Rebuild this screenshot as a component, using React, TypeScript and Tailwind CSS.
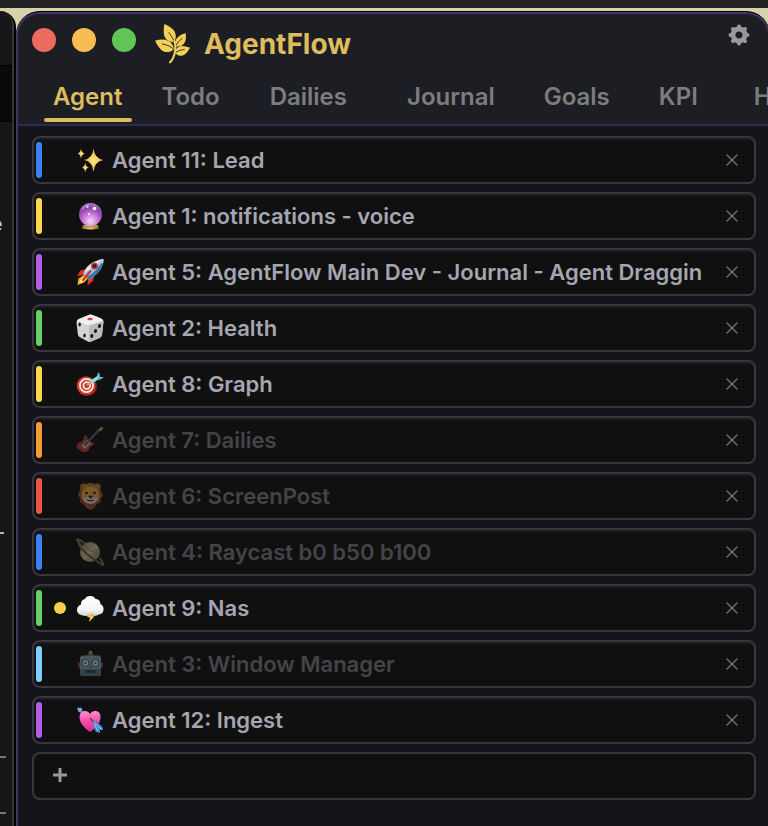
import React, { useState } from 'react';
import { clsx } from 'clsx';

interface Tab {
  name: string;
  pad: string;
}

interface Agent {
  id: number;
  name: string;
  bar: string;
  icon: React.ReactNode;
  idle?: boolean;
  pending?: boolean;
}

const Icon = ({ children }: { children: React.ReactNode }) => (
  <svg viewBox="0 0 28 28" className="w-7 h-7" aria-hidden="true">
    {children}
  </svg>
);

const Sparkles = () => (
  <Icon>
    <defs>
      <radialGradient id="spark">
        <stop offset="0" stopColor="#ffe873" />
        <stop offset="1" stopColor="#efaf4c" />
      </radialGradient>
    </defs>
    <g fill="url(#spark)">
      <path d="M17.500 2.500Q18.300 12.500 27.500 14Q18.300 15.500 17.500 26Q16.700 15.500 8 14Q16.700 12.500 17.500 2.500Z" />
      <path d="M5 2.500Q5.500 7 9 7.600Q5.500 8.200 5 13Q4.500 8.200 1.500 7.600Q4.500 7 5 2.500Z" />
      <path d="M9.200 16.500Q9.700 20.900 13 21.500Q9.700 22.100 9.200 26.500Q8.700 22.100 5.800 21.500Q8.700 20.900 9.200 16.500Z" />
    </g>
  </Icon>
);

const CrystalBall = () => (
  <Icon>
    <defs>
      <radialGradient id="ball" cx=".5" cy=".8" r=".8">
        <stop offset="0" stopColor="#f6d8ff" />
        <stop offset=".4" stopColor="#c97ad9" />
        <stop offset=".75" stopColor="#9140a8" />
        <stop offset="1" stopColor="#aa83bb" />
      </radialGradient>
      <linearGradient id="stand">
        <stop offset="0" stopColor="#9b6f28" />
        <stop offset=".5" stopColor="#f0d376" />
        <stop offset="1" stopColor="#84621f" />
      </linearGradient>
    </defs>
    <path d="M7 23h15l1 3.500Q14.500 28.500 6 26.500Z" fill="url(#stand)" />
    <circle cx="14.500" cy="12.500" r="11.500" fill="url(#ball)" />
    <path d="M8 22.500Q14.500 26 21 22.500l-.5 2.200Q14.500 26.500 8.500 24.700Z" fill="#b99549" />
    <circle cx="18.500" cy="6.500" r="1.800" fill="#fff" />
    <circle cx="13" cy="12" r="1.100" fill="#fff" opacity=".9" />
    <circle cx="11.500" cy="5" r="1" fill="#fff" opacity=".8" />
    <path d="M6 8Q9 3 13 3" stroke="#e8bcf0" strokeWidth="1" fill="none" opacity=".7" />
  </Icon>
);

const Rocket = () => (
  <Icon>
    <path d="M10 11L4.500 12.500L1 18L8.500 17Z" fill="#d9341f" />
    <path d="M18 18L17 23L11.500 27.500L12 20Z" fill="#d9341f" />
    <path d="M8 17L2.500 20.500L1.500 27L8 24.500L12 20.500Z" fill="#f8b52a" />
    <path d="M8 18.500L4.500 22L3.500 25.500L8 22.500L10 20Z" fill="#fff09a" />
    <path d="M27.500 1Q28 10 18.500 18L13 21.500L7 16L10.500 9.500Q17 2 27.500 1Z" fill="#9fc4df" />
    <path d="M27.500 1Q28 10 18.500 18L13 21.500L10.500 19Q22 13 27.500 1Z" fill="#2f76b7" />
    <path d="M27 1.500Q17 2.500 10.500 10L8 15Q16 11 27 1.500Z" fill="#dfe8ee" />
    <path d="M27.500 1Q25 1 22.500 2L26.500 6Q27.600 4 27.500 1Z" fill="#b9cbd8" />
    <circle cx="18.500" cy="8" r="3.500" fill="#d83a31" />
    <circle cx="18.500" cy="8" r="2" fill="#202b34" />
    <path d="M14.500 13L7 22" stroke="#d82d1d" strokeWidth="2" strokeLinecap="round" />
  </Icon>
);

const Dice = () => (
  <Icon>
    <path d="M14 0.500Q16 .5 25 4.500Q28 6 27.500 8L26 21Q25.500 23 23.500 24L15.500 27.500Q13.500 28.500 11 27L3.500 23Q2 22 1.800 20L.5 8Q.5 6 3 5Z" fill="#d4d5d3" />
    <path d="M13 10.500L27.500 7L26 21Q25.500 23 23.500 24L13 28Z" fill="#b9bbb9" />
    <path d="M14 .5Q16 .5 25 4.500Q28 6 26 7.500L14.500 11Q13 11.500 11 10.700L2 7.500Q0 6 3 5Z" fill="#eff0ed" />
    <ellipse cx="14" cy="5" rx="2.700" ry="1.200" fill="#df3b35" />
    <g fill="#171717">
      <ellipse cx="3.700" cy="10.500" rx="1.200" ry="2" />
      <ellipse cx="8.500" cy="21.500" rx="1.200" ry="2" />
      <ellipse cx="23.500" cy="12" rx="1.500" ry="2.100" transform="rotate(15 23.500 12)" />
      <ellipse cx="19.500" cy="17" rx="1.500" ry="2.100" transform="rotate(15 19.500 17)" />
      <ellipse cx="15.800" cy="22" rx="1.500" ry="2.100" transform="rotate(15 15.800 22)" />
    </g>
  </Icon>
);

const Target = () => (
  <Icon>
    <ellipse cx="11" cy="16.500" rx="10" ry="9.500" fill="#9d2119" />
    <circle cx="10" cy="15.500" r="9.300" fill="#d53a2c" />
    <circle cx="10.500" cy="15.500" r="6.600" fill="none" stroke="#f3eeee" strokeWidth="1.800" />
    <circle cx="10.800" cy="15.500" r="3.400" fill="none" stroke="#f3eeee" strokeWidth="1.700" />
    <path d="M11 15L16 12" stroke="#d7a744" strokeWidth="1.800" />
    <path d="M14.500 12.500L23 7" stroke="#79d2dc" strokeWidth="3.500" />
    <path d="M20 8L22.500 2L24 4.500L23.500 6.500L28 7.500L23.500 10Z" fill="#58b6c9" />
    <path d="M15 12L23 6.500" stroke="#c6f5ee" strokeWidth="1" />
  </Icon>
);

const Guitar = () => (
  <Icon>
    <path d="M8 10Q10 8 11 11L13 14L15 16Q16 17 18 16.500Q18 20 14 20.500Q13 22 13 24Q10 28 5 25L1 22Q-.5 18 3.500 16.500Q7.500 16 8 10Z" fill="#c83b36" />
    <path d="M11 14L15 18L9 23L5.500 19.500Z" fill="#d5d5d5" />
    <path d="M9 19L24 3" stroke="#6d6663" strokeWidth="2.400" />
    <path d="M22.500 4Q24 0 27.500 1.500Q27 4 24 5.500Z" fill="#d29462" />
    <path d="M7 18l4 3M9 16l4 3" stroke="#555" strokeWidth="1" />
  </Icon>
);

const Lion = () => (
  <Icon>
    <path d="M4 3Q7 0 10 2Q14 -.5 18 2Q22 0 25 3L24.500 7L27 13L24.500 17L25 20L21 22L18.500 26L14.500 28L10.500 26L7.500 22L4 20L4.500 17L2 13L4 7Z" fill="#a8542b" />
    <path d="M5 4Q8 0 10.500 3Q14.500 0 18.500 3Q21 0 24 4L23 10L24.500 15H4.500L6 9Z" fill="#c5822d" />
    <ellipse cx="14.500" cy="12.500" rx="8.500" ry="8" fill="#efb044" />
    <path d="M5.500 14Q10 19 14.500 13Q19 19 23.500 14Q22 21 14.500 22Q7 21 5.500 14Z" fill="#e7dfc8" />
    <circle cx="10.500" cy="11" r="1.300" fill="#241b18" />
    <circle cx="18.500" cy="11" r="1.300" fill="#241b18" />
    <path d="M12.500 14h4L14.500 16.500ZM11 18Q14.500 20 18 18" fill="#302424" stroke="#302424" strokeWidth=".8" />
  </Icon>
);

const Planet = () => (
  <Icon>
    <defs>
      <linearGradient id="saturn" x1="0" y1="0" x2="1" y2="1">
        <stop offset="0" stopColor="#99896c" />
        <stop offset=".5" stopColor="#d5c99d" />
        <stop offset="1" stopColor="#807359" />
      </linearGradient>
    </defs>
    <path d="M7 9Q-1 1 2 1.500Q5 2 11 7" stroke="#85714e" strokeWidth="2" fill="none" />
    <circle cx="14" cy="14" r="10" fill="url(#saturn)" />
    <path d="M7 7Q14 14 24 16" stroke="#a18f69" strokeWidth="1" fill="none" />
    <path d="M2 2Q3 11 15 19Q23 25 27 27Q28 25 23.500 20" stroke="#8e7754" strokeWidth="2" fill="none" />
    <path d="M5 10Q11 18 21 23.500" stroke="#4e432d" strokeWidth="1" fill="none" />
  </Icon>
);

const StormCloud = () => (
  <Icon>
    <defs>
      <linearGradient id="cloud" x1="0" y1="0" x2="0" y2="1">
        <stop offset="0" stopColor="#fff" />
        <stop offset=".7" stopColor="#f2f4f8" />
        <stop offset="1" stopColor="#c8ced8" />
      </linearGradient>
    </defs>
    <path d="M5 21Q1 20 1 16Q1 12 5 10.500Q4.500 6 9 5Q10 2 14.500 2Q18 2 19.500 5Q24 5 24.500 10Q28 12 27.500 16Q27 20 23 20.500Q19 23 15 21Q10 23 5 21Z" fill="url(#cloud)" />
    <path d="M13.500 19.500L11 23L14 23.500L13 28L18.500 22.500L15.500 21.800L18 19Z" fill="#f2c94c" />
  </Icon>
);

const Robot = () => (
  <Icon>
    <rect x="2" y="12" width="25" height="6" rx="2" fill="#b6463d" />
    <path d="M11 6Q11 3 14.500 3Q18 3 18 6Z" fill="#6c4d78" />
    <circle cx="14.500" cy="2.500" r="2" fill="#db9f33" />
    <path d="M4 8Q4 5.500 7 5.500H22Q25 5.500 25 8V24Q25 26 22 26H7Q4 26 4 24Z" fill="#86aeb9" />
    <path d="M4 19H25V24Q25 26 22 26H7Q4 26 4 24Z" fill="#53858f" />
    <circle cx="9.500" cy="13" r="3.500" fill="#e0f4ee" stroke="#395e69" />
    <circle cx="19.500" cy="13" r="3.500" fill="#e0f4ee" stroke="#395e69" />
    <circle cx="9.500" cy="13" r="1.200" fill="#48717e" />
    <circle cx="19.500" cy="13" r="1.200" fill="#48717e" />
    <path d="M14.500 15L16.500 18H12.500Z" fill="#cf493f" />
    <path d="M9.500 21.500H19.500" stroke="#20343b" strokeWidth="2.500" strokeDasharray="2 .6" />
  </Icon>
);

const HeartArrow = () => (
  <Icon>
    <defs>
      <linearGradient id="heart" x1="0" y1="0" x2="0" y2="1">
        <stop offset="0" stopColor="#ff91cb" />
        <stop offset=".5" stopColor="#f44ba9" />
        <stop offset="1" stopColor="#d92c8b" />
      </linearGradient>
    </defs>
    <path d="M1 2L5 1.500L6.500 4L5.500 6.500L2.500 6Z" fill="#6fa8dc" />
    <path d="M5 5L8 8" stroke="#4a83ba" strokeWidth="1.500" />
    <path d="M14 26Q4 19 3.500 12Q3 6 8 5Q12 4.500 14 8Q16 4.500 20 5Q25 6 24.500 12Q24 19 14 26Z" fill="url(#heart)" />
    <path d="M14 12L21 20" stroke="#663366" strokeWidth="1.200" />
    <path d="M17 15L21 16L26.500 21L27 24L24 23.500L24 27L20 26L17.500 21Z" fill="#4385ca" />
    <path d="M18 16L26 24M18 18L22 25" stroke="#a2d2fa" strokeWidth="1" />
  </Icon>
);

const Logo = () => (
  <svg viewBox="6 12 108 120" className="w-9 h-10" aria-hidden="true">
    <g fill="#f3cf58">
      <path d="M37 12Q58 21 67 33Q76 47 67 66Q48 66 40 54Q32 42 37 12Z" />
      <path d="M9 62Q33 55 50 63Q63 70 66 87Q58 98 39 96Q24 92 9 62Z" />
      <path d="M101 39Q104 62 95 72Q86 82 70 79Q66 63 76 53Q84 44 101 39Z" />
      <path d="M114 83Q103 104 89 107Q76 109 68 97Q74 79 89 78Q102 78 114 83Z" />
    </g>
    <path d="M51 38Q59 48 68 66M31 72Q54 75 67 90M90 55Q78 63 70 80M97 88Q81 90 69 98" stroke="#1d1e24" strokeWidth="2.600" fill="none" strokeLinecap="round" />
    <path d="M67 64Q72 75 69 94Q66 115 54 127" stroke="#f3cf58" strokeWidth="6.500" fill="none" strokeLinecap="round" />
  </svg>
);

const Gear = () => (
  <svg viewBox="-11 -11 22 22" className="w-[22px] h-[22px]" stroke="currentColor" fill="none" aria-hidden="true">
    <circle r="6" strokeWidth="4.800" />
    <g strokeWidth="4" strokeLinecap="round">
      <path d="M0 -7.500V-8.500M0 7.500V8.500M-7.500 0H-8.500M7.500 0H8.500" />
      <path d="M5.300 5.300L6 6M-5.300 5.300L-6 6M5.300 -5.300L6 -6M-5.300 -5.300L-6 -6" />
    </g>
  </svg>
);

const tabs: Tab[] = [
  { name: 'Agent', pad: 'px-[9px]' },
  { name: 'Todo', pad: 'px-[10px]' },
  { name: 'Dailies', pad: 'px-5' },
  { name: 'Journal', pad: 'px-5' },
  { name: 'Goals', pad: 'px-[9px]' },
  { name: 'KPI', pad: 'px-5' },
  { name: 'Habits', pad: 'px-4' },
];

const initialAgents: Agent[] = [
  { id: 11, name: 'Lead', bar: 'bg-[#3b82f6]', icon: <Sparkles /> },
  { id: 1, name: 'notifications - voice', bar: 'bg-[#fbd84b]', icon: <CrystalBall /> },
  { id: 5, name: 'AgentFlow Main Dev - Journal - Agent Draggin', bar: 'bg-[#b45ae8]', icon: <Rocket /> },
  { id: 2, name: 'Health', bar: 'bg-[#67cf68]', icon: <Dice /> },
  { id: 8, name: 'Graph', bar: 'bg-[#fbd84b]', icon: <Target /> },
  { id: 7, name: 'Dailies', bar: 'bg-[#f19a37]', icon: <Guitar />, idle: true },
  { id: 6, name: 'ScreenPost', bar: 'bg-[#eb5545]', icon: <Lion />, idle: true },
  { id: 4, name: 'Raycast b0 b50 b100', bar: 'bg-[#3b82f6]', icon: <Planet />, idle: true },
  { id: 9, name: 'Nas', bar: 'bg-[#67cf68]', icon: <StormCloud />, pending: true },
  { id: 3, name: 'Window Manager', bar: 'bg-[#7dcffb]', icon: <Robot />, idle: true },
  { id: 12, name: 'Ingest', bar: 'bg-[#b45ae8]', icon: <HeartArrow /> },
];

const rowClass = 'h-12 w-full flex items-center rounded-lg border-2 border-[#38373d] bg-[#101010]';

function AgentRow({ agent, onClose }: { agent: Agent; onClose: () => void }) {
  return (
    <li className={clsx(rowClass, 'pl-[2px] pr-3 shadow-[inset_0_2px_0_#1a1a1e]')}>
      <span className={clsx('w-[6px] h-9 rounded-full shrink-0', agent.bar)} />
      <span className={clsx('w-3 h-3 ml-3 mr-[10px] rounded-full shrink-0', agent.pending && 'bg-[#f7d04b]')} />
      <span className="flex flex-1 min-w-0 items-center gap-2">
        <span className={clsx('shrink-0', agent.idle && 'opacity-45')}>{agent.icon}</span>
        <span className={clsx('whitespace-nowrap text-[22px] leading-7 font-semibold text-[#a5a6b1]', agent.idle && 'opacity-35')}>
          Agent {agent.id}: {agent.name}
        </span>
      </span>
      <button onClick={onClose} aria-label={`Close agent ${agent.id}`} className="ml-3 w-5 h-5 shrink-0 flex items-center justify-center text-[#77777a]">
        <svg viewBox="0 0 12 12" className="w-3 h-3" stroke="currentColor" strokeWidth="1.300" strokeLinecap="round">
          <path d="M1 1L11 11M11 1L1 11" />
        </svg>
      </button>
    </li>
  );
}

export default function App() {
  const [activeTab, setActiveTab] = useState('Agent');
  const [agents, setAgents] = useState(initialAgents);

  const addAgent = () => {
    const id = Math.max(0, ...agents.map(a => a.id)) + 1;
    setAgents([...agents, { id, name: 'New', bar: 'bg-[#3b82f6]', icon: <Sparkles /> }]);
  };

  return (
    <div className="min-h-screen flex flex-col overflow-hidden bg-[#212121] pt-2 font-[Inter,sans-serif]">
      <div className="flex flex-1 bg-[#d8cfab] pt-[3px]">
        {/* Edge of the window behind */}
        <aside className="w-4 shrink-0 flex flex-col overflow-hidden rounded-tr-2xl border-r-2 border-black bg-[#171717]">
          <div className="flex-1 flex flex-col overflow-hidden rounded-tr-2xl border-r-2 border-[#343434]">
            <div className="h-[55px] shrink-0 border-b border-black" />
            <div className="h-14 shrink-0 border-b border-black bg-[#0a0a0a]" />
            <div className="h-[410px] shrink-0 pt-[90px]">
              <span className="block -ml-[9px] text-xl leading-6 text-[#c5c5c5]">e</span>
            </div>
            <div className="h-[2px] w-1 shrink-0 bg-[#b8b8b8]" />
            <div className="mt-[222px] h-[2px] w-[6px] shrink-0 bg-[#777777]" />
            <div className="mt-[54px] h-[2px] w-[6px] shrink-0 bg-[#777777]" />
          </div>
        </aside>

        <main className="flex-1 min-w-0 flex flex-col -mr-[2px] overflow-hidden rounded-t-3xl border-t border-black bg-black">
          <div className="flex-1 flex flex-col overflow-hidden rounded-t-3xl border-2 border-b-0 border-[#40366a] bg-[#15141b]">
            <header className="border-b-2 border-[#302b49] bg-[#1d1e24]">
              <div className="flex items-start pl-[14px] pr-[18px]">
                <div className="flex gap-4 pt-[14px]">
                  <button aria-label="Close" className="w-6 h-6 rounded-full bg-[#ed6a5f]" />
                  <button aria-label="Minimize" className="w-6 h-6 rounded-full bg-[#f6be50]" />
                  <button aria-label="Zoom" className="w-6 h-6 rounded-full bg-[#61c555]" />
                </div>
                <div className="flex items-center gap-[14px] ml-[18px] pt-[10px]">
                  <Logo />
                  <h1 className="text-[28px] leading-10 font-bold text-[#dfbc5e]">AgentFlow</h1>
                </div>
                <button aria-label="Settings" className="ml-auto mt-[10px] text-[#999999]">
                  <Gear />
                </button>
              </div>

              <nav className="flex gap-5 pl-[26px] pt-[17px] pb-[5px] overflow-hidden">
                {tabs.map(tab => (
                  <button
                    key={tab.name}
                    onClick={() => setActiveTab(tab.name)}
                    className={clsx('shrink-0 text-2xl leading-8 font-semibold', tab.pad, activeTab === tab.name ? 'text-[#dfbc5e]' : 'text-[#7d7d7e]')}
                  >
                    {tab.name}
                  </button>
                ))}
              </nav>
              <div className="pl-[26px] pb-[2px]">
                <div className="h-1 w-[88px] rounded-full bg-[#dfbc5e]" />
              </div>
            </header>

            <section className="pt-[10px] pl-[14px] pr-3 pb-6">
              <ul className="flex flex-col gap-2">
                {agents.map(agent => (
                  <AgentRow key={agent.id} agent={agent} onClose={() => setAgents(agents.filter(a => a.id !== agent.id))} />
                ))}
              </ul>
              <button onClick={addAgent} aria-label="Add agent" className={clsx(rowClass, 'mt-2 pb-[2px] pl-[18px] text-[#97979d]')}>
                <svg viewBox="0 0 16 16" className="w-4 h-4" stroke="currentColor" strokeWidth="3">
                  <path d="M8 1V15M1 8H15" />
                </svg>
              </button>
            </section>
          </div>
        </main>
      </div>
    </div>
  );
}
